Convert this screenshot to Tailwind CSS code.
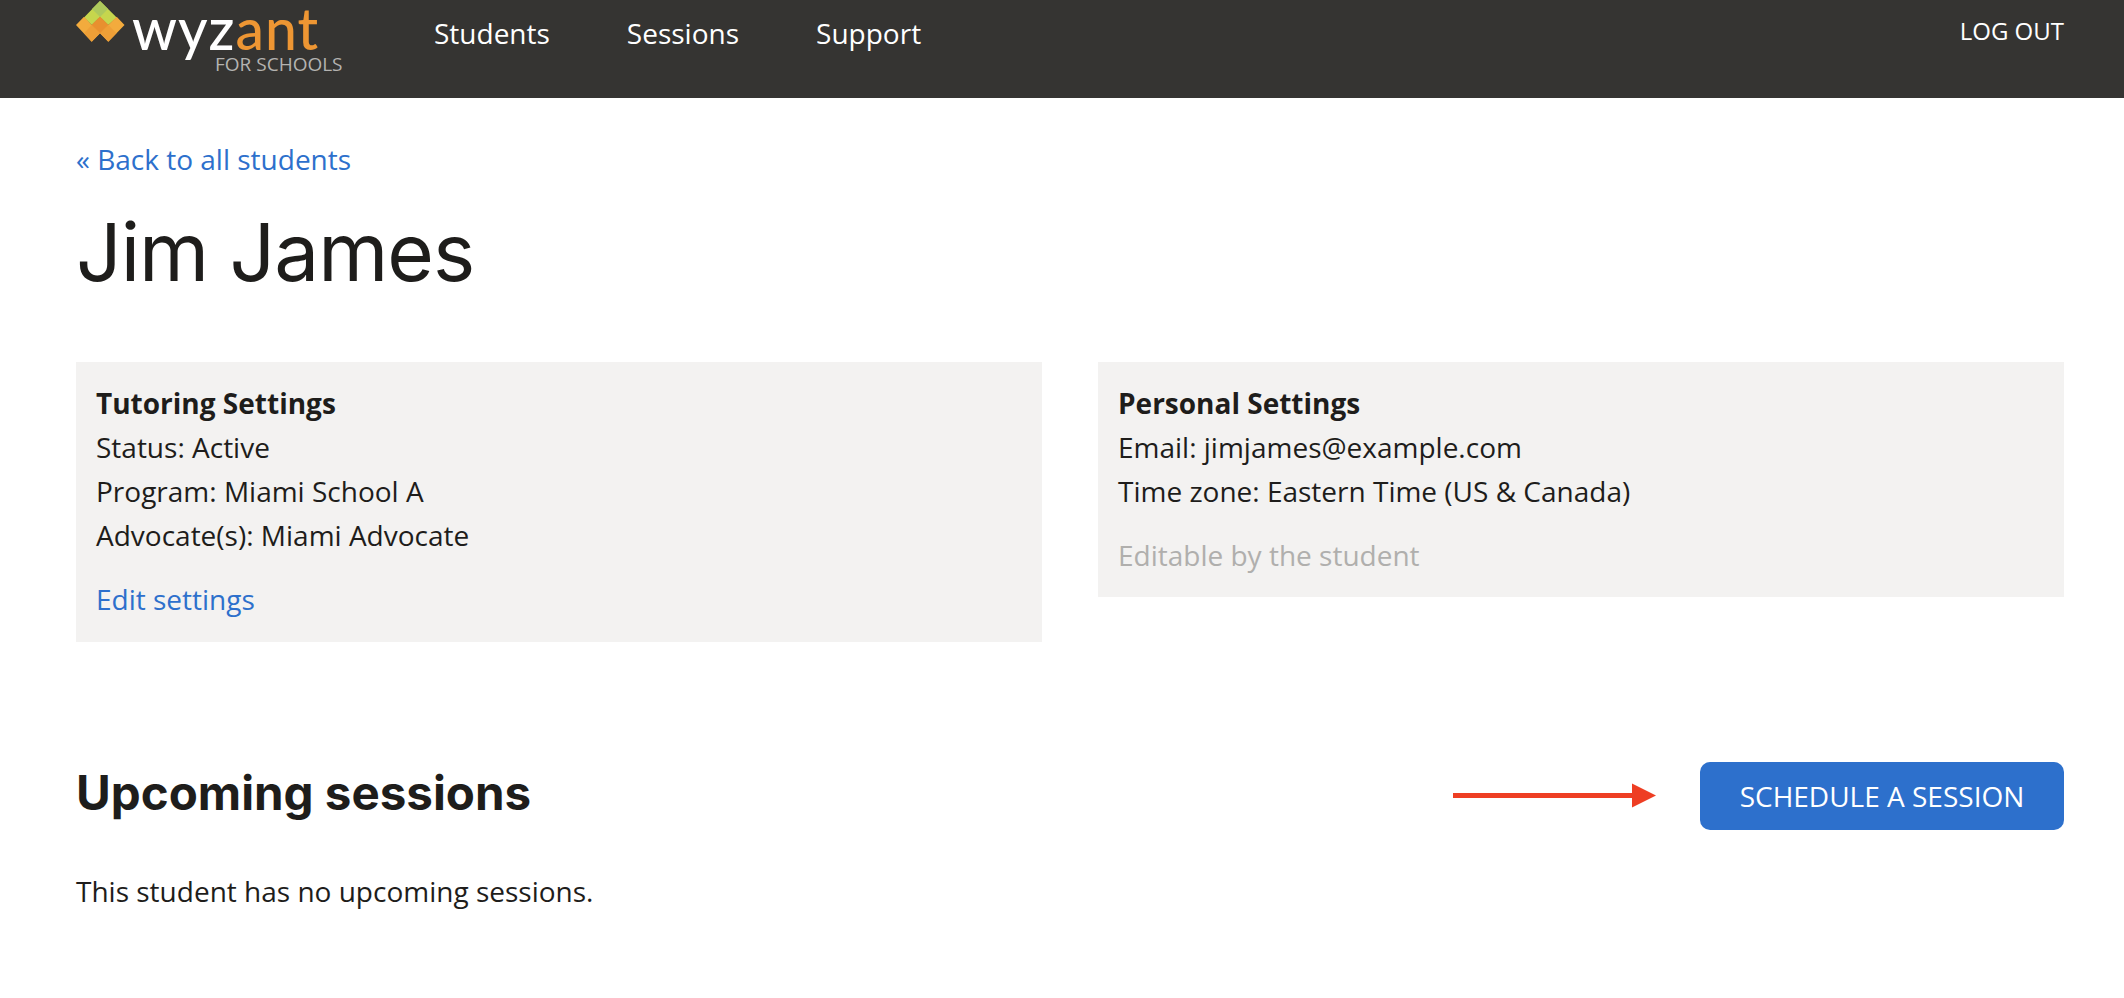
<!DOCTYPE html>
<html lang="en">
<head>
<meta charset="utf-8">
<title>Jim James</title>
<script src="https://cdn.jsdelivr.net/npm/@tailwindcss/browser@4"></script>
</head>
<body class="bg-white font-['Open_Sans','Noto_Sans',sans-serif] text-[28px] text-[#1e1d1b] overflow-hidden h-[998px]">
<header class="h-[98px] bg-[#353432] pl-[76px] pr-[60px] flex items-start justify-between text-white">
  <div class="flex items-start">
    <div class="relative w-[270px] h-[98px] shrink-0">
      <svg class="absolute left-0 top-0" width="50" height="44" viewBox="76 0 50 44">
        <polygon points="100,1 116.7,17.5 108.3,25 100,16.7 91.7,25 84,17.5" fill="#c6d64d"/>
        <polygon points="100,1 108,9 100,17 92,9" fill="#adc95c"/>
        <polygon points="76,25 84,16.7 91.7,25 100,16.7 108.3,25 116.7,16.7 124.5,25 108.3,41.7 100,33.3 91.7,41.7" fill="#f3ab3d"/>
        <polygon points="84,33.3 91.7,25 100,33.3 91.7,41.7" fill="#ee9f37"/>
        <polygon points="100,33.3 108.3,25 116.5,33.3 108.3,41.7" fill="#ee9f37"/>
        <polygon points="91.7,25 100,16.7 108.3,25 100,33.3" fill="#e8902f"/>
      </svg>
      <span class="absolute left-[56px] top-[1px] font-['Lato',sans-serif] font-medium text-[57px] leading-[54px] tracking-[1px] whitespace-nowrap"><span class="text-white">wyz</span><span class="text-[#ee9633]">ant</span></span>
      <span class="absolute left-[139px] top-[55px] text-[19px] leading-[18px] text-[#b4b3b1] whitespace-nowrap">FOR SCHOOLS</span>
    </div>
    <nav class="ml-[88px] mt-[13px] flex gap-[77px] leading-[40px]">
      <a>Students</a>
      <a>Sessions</a>
      <a>Support</a>
    </nav>
  </div>
  <a class="mt-[13px] text-[24px] leading-[36px]">LOG OUT</a>
</header>
<main class="pl-[76px] pr-[60px]">
  <a class="block mt-[41px] text-[#2d70cc] leading-[40px]">« Back to all students</a>
  <h1 class="mt-[19px] font-['Inter',sans-serif] text-[80px] leading-[108px] tracking-[-1px] text-[#1e1d1b]">Jim James</h1>
  <div class="mt-[56px] grid grid-cols-2 gap-[56px] items-start">
    <section class="bg-[#f3f2f1] px-[20px] pt-[19px] h-[280px] leading-[44px]">
      <div class="font-bold">Tutoring Settings</div>
      <div>Status: Active</div>
      <div>Program: Miami School A</div>
      <div>Advocate(s): Miami Advocate</div>
      <a class="block mt-[20px] text-[#2d70cc]">Edit settings</a>
    </section>
    <section class="bg-[#f3f2f1] px-[20px] pt-[19px] h-[235px] leading-[44px]">
      <div class="font-bold">Personal Settings</div>
      <div>Email: jimjames@example.com</div>
      <div>Time zone: Eastern Time (US &amp; Canada)</div>
      <div class="mt-[20px] text-[#b0afad]">Editable by the student</div>
    </section>
  </div>
  <div class="mt-[120px] flex items-center justify-between h-[68px]">
    <h2 class="mb-[6px] font-['Inter',sans-serif] font-bold text-[47.5px] leading-[68px]">Upcoming sessions</h2>
    <div class="flex items-center">
      <svg width="203" height="26" viewBox="0 0 203 26" class="mr-[44px]">
        <rect x="0" y="10" width="180" height="5" fill="#ee3e23"/>
        <polygon points="179,0.5 203,12.5 179,24.5" fill="#ee3e23"/>
      </svg>
      <button class="w-[364px] h-[68px] bg-[#2d70cc] text-white rounded-[10px] text-[28px]">SCHEDULE A SESSION</button>
    </div>
  </div>
  <p class="mt-[41px] leading-[40px]">This student has no upcoming sessions.</p>
</main>
</body>
</html>
